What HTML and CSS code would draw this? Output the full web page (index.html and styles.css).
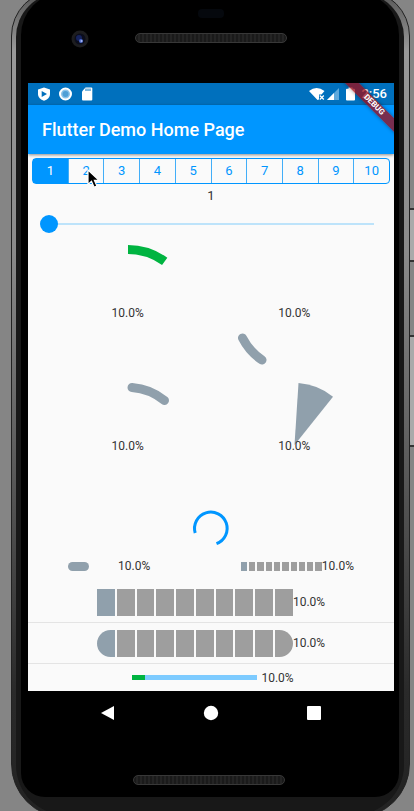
FILE: index.html
```html
<!DOCTYPE html>
<html lang="en">
<head>
<meta charset="utf-8">
<meta name="viewport" content="width=device-width, initial-scale=1">
<title>Flutter Demo Home Page</title>
<link rel="stylesheet" href="styles.css">
</head>
<body>
<div class="phone">
  <div class="face">
    <div class="glass">
      <div class="forehead">
        <span class="sensor"></span>
        <svg class="camera" viewBox="0 0 18 18" aria-hidden="true">
          <circle cx="9" cy="9" r="8.5" fill="#1d1d1f"/>
          <circle cx="9" cy="9" r="5.5" fill="#0b0d1c"/>
          <circle cx="8" cy="8" r="3" fill="#16235c"/>
          <circle cx="10" cy="11" r="2" fill="#4a67c8"/>
          <circle cx="10.500" cy="11" r="1" fill="#a9b9f5"/>
        </svg>
        <span class="speaker"></span>
      </div>

      <div class="screen">
        <div class="statusbar">
          <svg class="status-icon" viewBox="0 0 14 14" aria-hidden="true">
            <path fill="#fff" d="M7 0.500 13 2.500V7c0 3.200-2.500 5.600-6 6.800C3.500 12.600 1 10.200 1 7V2.500Z"/>
            <path fill="#0070bd" d="M4.700 3.900 10 6.900 4.700 9.900Z"/>
          </svg>
          <svg class="status-icon" viewBox="0 0 14 14" aria-hidden="true">
            <circle cx="6.500" cy="7" r="5.500" fill="#8cc3e8" stroke="#fff" stroke-width="2"/>
            <circle cx="6.500" cy="7" r="3" fill="#4f9fd6"/>
          </svg>
          <svg class="status-icon" viewBox="0 0 14 14" aria-hidden="true">
            <path fill="#fff" d="M4.500 0.500h5.800q1 0 1 1v11q0 1-1 1H2q-1 0-1-1V4.500Z"/>
            <path stroke="#0070bd" d="M5 1.500v2.500M7 1.500v2.500M9 1.500v2.500"/>
          </svg>
          <span class="spacer"></span>
          <svg class="wifi" viewBox="0 0 16 14" aria-hidden="true">
            <path fill="#fff" d="M0 4Q7.500-2 15.500 4L12.500 7.500H10V12.500L8.500 13Z"/>
            <path stroke="#fff" stroke-width="1.300" d="m10.800 8.500 4 4m0-4-4 4"/>
          </svg>
          <svg class="signal" viewBox="0 0 12 14" aria-hidden="true">
            <path fill="#5fa9dc" d="M12 1v12H0Z"/>
            <path fill="#fff" d="M7 6v7H0Z"/>
          </svg>
          <svg class="battery" viewBox="0 0 9 14" aria-hidden="true">
            <path fill="#fff" d="M2.500 0.500h4v1.200H8q1 0 1 1v10q0 .8-1 .8H1q-1 0-1-.8v-10q0-1 1-1h1.500Z"/>
          </svg>
          <time class="clock">2:56</time>
        </div>
        <header class="appbar"><h1>Flutter Demo Home Page</h1></header>
        <div class="ribbon"><span>DEBUG</span></div>

        <main>
          <div class="steps">
            <button type="button" class="step active">1</button>
            <button type="button" class="step">2
              <svg class="pointer" viewBox="0 0 13 20" aria-hidden="true">
                <path fill="#000" stroke="#fff" stroke-width="1.200" d="M1 1v14.500l3.500-3.200 2.600 6 2.800-1.200-2.500-5.700h4.600Z"/>
              </svg>
            </button>
            <button type="button" class="step">3</button>
            <button type="button" class="step">4</button>
            <button type="button" class="step">5</button>
            <button type="button" class="step">6</button>
            <button type="button" class="step">7</button>
            <button type="button" class="step">8</button>
            <button type="button" class="step">9</button>
            <button type="button" class="step">10</button>
          </div>
          <label class="value" for="amount">1</label>
          <div class="slider-row">
            <input class="slider" id="amount" type="range" min="1" max="10" value="1">
          </div>

          <div class="gauges">
            <div class="gauge">
              <svg viewBox="0 0 134 134" aria-hidden="true"><path class="arc green" d="M67 4.500A62.500 62.500 0 0 1 103.700 16.400"/></svg>
              <span>10.0%</span>
            </div>
            <div class="gauge">
              <svg viewBox="0 0 134 134" aria-hidden="true"><path class="arc round" d="M35 115A58 58 0 0 1 15.500 93"/></svg>
              <span>10.0%</span>
            </div>
            <div class="gauge">
              <svg viewBox="0 0 134 134" aria-hidden="true"><path class="arc round" d="M71 9.500A58 58 0 0 1 103.500 22.500"/></svg>
              <span>10.0%</span>
            </div>
            <div class="gauge">
              <svg viewBox="0 0 134 134" aria-hidden="true"><path class="wedge" d="M67.500 67 71.500 5A62 62 0 0 1 106 18.700Z"/></svg>
              <span>10.0%</span>
            </div>
          </div>

          <svg class="spinner" viewBox="0 0 36 36" role="img" aria-label="Loading">
            <path d="M2.200 22A16.300 16.300 0 1 1 23.500 32.700"/>
          </svg>

          <div class="pair">
            <div class="meter"><span class="pill-track"><span class="pill"></span></span><span>10.0%</span></div>
            <div class="meter">
              <span class="segments small"><i class="on"></i><i></i><i></i><i></i><i></i><i></i><i></i><i></i><i></i><i></i></span>
              <span>10.0%</span>
            </div>
          </div>
          <div class="row">
            <span class="segments"><i class="on"></i><i></i><i></i><i></i><i></i><i></i><i></i><i></i><i></i><i></i></span>
            <span>10.0%</span>
          </div>
          <div class="row">
            <span class="segments rounded"><i class="on"></i><i></i><i></i><i></i><i></i><i></i><i></i><i></i><i></i><i></i></span>
            <span>10.0%</span>
          </div>
          <div class="row last">
            <span class="line"><span class="line-fill"></span></span>
            <span>10.0%</span>
          </div>
        </main>
      </div>

      <nav class="navbar">
        <button type="button" aria-label="Back"><svg viewBox="0 0 16 16"><path d="M14 1v14L1 8Z"/></svg></button>
        <button type="button" aria-label="Home"><svg viewBox="0 0 16 16"><circle cx="8" cy="8" r="7.200"/></svg></button>
        <button type="button" aria-label="Recents"><svg viewBox="0 0 16 16"><rect x="1" y="1" width="14" height="14" rx="1"/></svg></button>
      </nav>
      <div class="chin"><span class="speaker"></span></div>
    </div>
  </div>
  <span class="side-key power"></span>
  <span class="side-key volume"></span>
</div>
</body>
</html>
```
FILE: styles.css
```css
* { box-sizing: border-box; }

html { height: 100%; overflow: hidden; }

body {
  height: 100%;
  margin: 0;
  overflow: hidden;
  background: #858585;
  color: #333;
  font: 12px/16px Roboto, "Liberation Sans", sans-serif;
}

button {
  margin: 0;
  padding: 0;
  border: 0;
  background: none;
  font: inherit;
}

svg { display: block; }

/* Handset */
.phone {
  position: relative;
  margin: -10px 4px 0 11px;
  padding: 2px 5px 2px 4px;
  border: 1px solid #222;
  border-radius: 46px 46px 54px 54px;
  background: linear-gradient(#555 0, #999 60px, #8a8a8a 260px, #555 500px, #2a2a2a 700px, #222 100%);
}

.face {
  padding: 0 5px 18px;
  border-radius: 44px 44px 50px 50px;
  background: #181818;
}

.glass {
  padding: 0 5px 0 7px;
  border-radius: 42px 42px 24px 24px;
  background: #000;
}

.forehead {
  display: grid;
  grid-template-columns: 1fr 152px 1fr;
  grid-template-rows: 16px 18px;
  row-gap: 5px;
  height: 90px;
  padding-top: 12px;
  align-items: center;
}

.sensor {
  grid-column: 2;
  justify-self: center;
  width: 26px;
  height: 9px;
  border-radius: 4px;
  background: #05080d;
}

.camera {
  grid-column: 1;
  grid-row: 2;
  justify-self: center;
  width: 18px;
  height: 18px;
  margin: 8px 3px 0 0;
}

.forehead .speaker {
  grid-column: 2;
  grid-row: 2;
  margin-top: 6px;
}

.speaker {
  width: 152px;
  height: 10px;
  border: 1px solid #383838;
  border-radius: 5px;
  background: repeating-linear-gradient(90deg, #1a1a1a 0 2px, #242424 2px 4px);
}

.side-key {
  position: absolute;
  right: -5px;
  width: 4px;
  border: solid #333;
  border-width: 2px 0;
  background: #aaa;
}

.power { top: 217px; height: 54px; }
.volume { top: 344px; height: 112px; }

/* Screen */
.screen {
  position: relative;
  overflow: hidden;
  background: #fafafa;
}

.statusbar {
  display: flex;
  align-items: center;
  height: 22px;
  padding: 0 7px 0 9px;
  background: #0070bd;
  color: #fff;
}

.status-icon { width: 14px; height: 14px; margin-right: 8px; }
.spacer { flex: 1; }
.wifi { width: 16px; height: 14px; margin-right: 2px; }
.signal { width: 12px; height: 14px; margin-right: 7px; }
.battery { width: 9px; height: 14px; margin-right: 6px; }
.clock { font-size: 13px; font-weight: 500; }

.appbar {
  position: relative;
  display: flex;
  align-items: center;
  height: 49px;
  padding: 0 14px;
  background: #0096ff;
  box-shadow: 0 1px 3px rgba(0, 0, 0, .45);
}

.appbar h1 {
  margin: 0;
  color: #fff;
  font-size: 18px;
  font-weight: 500;
  line-height: 24px;
}

.ribbon {
  position: absolute;
  top: 17px;
  right: -30px;
  width: 100px;
  height: 10px;
  background: rgba(160, 10, 20, .75);
  box-shadow: 0 0 4px rgba(0, 0, 0, .4);
  color: #fff;
  font-size: 8px;
  font-weight: 700;
  line-height: 10px;
  text-align: center;
  transform: rotate(45deg);
}

.steps {
  display: flex;
  height: 26px;
  margin: 4px 4px 0;
  border: 1px solid #0096ff;
  border-radius: 4px;
}

.step {
  position: relative;
  flex: 1;
  border-left: 1px solid #42aef8;
  color: #0096ff;
  font-size: 13px;
}

.step.active {
  border-left: 0;
  background: #0096ff;
  color: #fff;
}

.pointer {
  position: absolute;
  top: 10px;
  left: 18px;
  width: 13px;
  height: 20px;
}

.value {
  display: block;
  padding: 4px 0 2px;
  font-size: 13px;
  text-align: center;
}

.slider-row {
  display: flex;
  align-items: center;
  height: 39px;
  padding: 0 20px 4px 12px;
}

.slider {
  width: 100%;
  height: 18px;
  margin: 0;
  appearance: none;
  background: linear-gradient(#bde3fa, #bde3fa) 9px center / 100% 2px no-repeat;
}

.slider::-webkit-slider-thumb {
  width: 18px;
  height: 18px;
  appearance: none;
  border-radius: 50%;
  background: #0096ff;
}

.gauges {
  display: grid;
  grid-template-columns: 134px 134px;
  grid-auto-rows: 133px;
  justify-content: space-evenly;
}

.gauge { display: grid; place-items: center; }
.gauge > * { grid-area: 1 / 1; }
.gauge svg { width: 134px; height: 134px; }
.gauge span { position: relative; padding-top: 2px; }

.arc { fill: none; stroke: #90a0ac; stroke-width: 9; }
.arc.green { stroke: #00b441; }
.arc.round { stroke-linecap: round; }
.wedge { fill: #90a0ac; }

.spinner {
  width: 36px;
  height: 36px;
  margin: 0 auto;
  overflow: visible;
  fill: none;
  stroke: #0096ff;
  stroke-width: 3;
}

.pair {
  display: flex;
  align-items: center;
  justify-content: space-between;
  height: 35px;
  padding: 3px 40px 0 40px;
}

.meter { display: flex; align-items: center; }
.pill-track { width: 50px; }

.pill {
  display: block;
  width: 21px;
  height: 9px;
  border-radius: 5px;
  background: #90a0ac;
}

.segments {
  display: flex;
  gap: 2px;
  width: 196px;
  height: 27px;
  overflow: hidden;
}

.segments i { flex: 1; background: #9e9e9e; }
.segments .on { background: #90a0ac; }
.segments.small { width: 81px; height: 9px; }
.segments.rounded { border-radius: 14px; }

.row {
  display: flex;
  align-items: center;
  justify-content: center;
  height: 41px;
  border-bottom: 1px solid #e4e4e4;
}

.row.last {
  gap: 4px;
  height: 27px;
  padding-left: 4px;
  border: 0;
}

.line { width: 125px; height: 5px; background: #7dcbff; }
.line-fill { display: block; width: 10%; height: 100%; background: #00b441; }

/* System navigation */
.navbar {
  display: flex;
  justify-content: center;
  gap: 87px;
  padding: 14px 0;
}

.navbar button, .navbar svg { width: 16px; height: 16px; }
.navbar svg { fill: #fff; }

.chin {
  display: flex;
  justify-content: center;
  height: 62px;
  padding: 40px 4px 0 0;
}
```
